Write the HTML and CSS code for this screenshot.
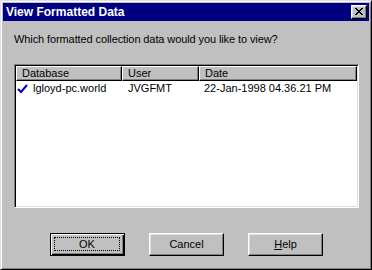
FILE: index.html
```html
<!DOCTYPE html>
<html>
<head>
<meta charset="utf-8">
<link rel="stylesheet" href="styles.css">
</head>
<body>
<div class="dialog">
  <div class="titlebar">
    <span class="title">View Formatted Data</span>
    <span class="close"><svg width="8" height="7" viewBox="0 0 8 7"><path d="M0 0h2v1h1v1h2v-1h1v-1h2v1h-1v1h-1v1h-1v1h1v1h1v1h1v1h-2v-1h-1v-1h-2v1h-1v1h-2v-1h1v-1h1v-1h1v-1h-1v-1h-1v-1h-1z" fill="#000"/></svg></span>
  </div>
  <div class="body">
    <p class="prompt">Which formatted collection data would you like to view?</p>
    <div class="list">
      <div class="header">
        <div class="hcol c1">Database</div>
        <div class="hcol c2">User</div>
        <div class="hcol c3">Date</div>
      </div>
      <div class="row">
        <div class="cell c1"><svg class="check" width="11" height="10" viewBox="0 0 11 10"><path d="M1 5 L4 8 L10 1" fill="none" stroke="#0000c8" stroke-width="2"/></svg>lgloyd-pc.world</div>
        <div class="cell c2">JVGFMT</div>
        <div class="cell c3">22-Jan-1998 04.36.21 PM</div>
      </div>
    </div>
    <div class="buttons">
      <div class="btn default"><span class="focus">OK</span></div>
      <div class="btn"><span class="label">Cancel</span></div>
      <div class="btn"><span class="label"><u>H</u>elp</span></div>
    </div>
  </div>
</div>
</body>
</html>
```
FILE: styles.css
```css
html, body {
  margin: 0;
  padding: 0;
  background: #c0c0c0;
}
.dialog {
  width: 372px;
  height: 270px;
  box-sizing: border-box;
  border: 1px solid;
  border-color: #dfdfdf #000 #000 #dfdfdf;
  box-shadow: inset 1px 1px #fff, inset -1px -1px #808080;
  padding: 2px;
  background: #c0c0c0;
  font-family: "Liberation Sans", Arial, sans-serif;
  font-size: 11px;
  color: #000;
  display: flex;
  flex-direction: column;
}
.titlebar {
  height: 18px;
  background: #000080;
  display: flex;
  align-items: center;
  justify-content: space-between;
  padding: 0 2px 0 3px;
}
.title {
  color: #fff;
  font-weight: bold;
  font-size: 12px;
  line-height: 14px;
}
.close {
  width: 16px;
  height: 14px;
  box-sizing: border-box;
  background: #c0c0c0;
  border: 1px solid;
  border-color: #fff #000 #000 #fff;
  box-shadow: inset -1px -1px #808080, inset 1px 1px #dfdfdf;
  display: flex;
  align-items: center;
  justify-content: center;
  padding: 0 1px 1px 0;
}
.close svg {
  display: block;
}
.body {
  flex: 1;
  display: flex;
  flex-direction: column;
  padding: 0 10px 0 11px;
}
.prompt {
  margin: 12px 0 0 0;
  line-height: 13px;
  letter-spacing: -0.1px;
}
.list {
  margin-top: 18px;
  height: 144px;
  box-sizing: border-box;
  background: #fff;
  border: 1px solid;
  border-color: #808080 #fff #fff #808080;
  box-shadow: inset 1px 1px #000, inset -1px -1px #dfdfdf;
  padding: 1px;
  overflow: hidden;
}
.header {
  display: flex;
  height: 15px;
}
.hcol {
  box-sizing: border-box;
  background: #c0c0c0;
  border: 1px solid;
  border-color: #fff #000 #000 #fff;
  box-shadow: inset -1px -1px #808080;
  padding-left: 5px;
  line-height: 12px;
  white-space: nowrap;
}
.c1 { width: 106px; }
.c2 { width: 77px; }
.c3 { flex: 1; }
.row {
  display: flex;
  height: 13px;
  margin-top: 1px;
  line-height: 13px;
}
.cell {
  box-sizing: border-box;
  padding-left: 6px;
  white-space: nowrap;
}
.cell.c1 {
  padding-left: 1px;
  display: flex;
  align-items: center;
}
.cell.c3 { padding-left: 5px; }
.check {
  display: block;
  margin-right: 5px;
}
.buttons {
  margin-top: 25px;
  display: flex;
  justify-content: center;
  gap: 24px;
}
.btn {
  width: 75px;
  height: 23px;
  box-sizing: border-box;
  border: 1px solid;
  border-color: #fff #000 #000 #fff;
  box-shadow: inset -1px -1px #808080, inset 1px 1px #dfdfdf;
  display: flex;
  align-items: center;
  justify-content: center;
  padding-bottom: 1px;
}
.btn.default {
  border: 1px solid #000;
  box-shadow: inset 1px 1px #fff, inset -1px -1px #000, inset -2px -2px #808080;
  padding: 3px;
}
.focus {
  flex: 1;
  align-self: stretch;
  border: 1px dotted #000;
  display: flex;
  align-items: center;
  justify-content: center;
  line-height: 13px;
  margin-right: 1px;
  margin-bottom: 1px;
}
.label {
  line-height: 13px;
}
u {
  text-decoration: underline;
}
```
